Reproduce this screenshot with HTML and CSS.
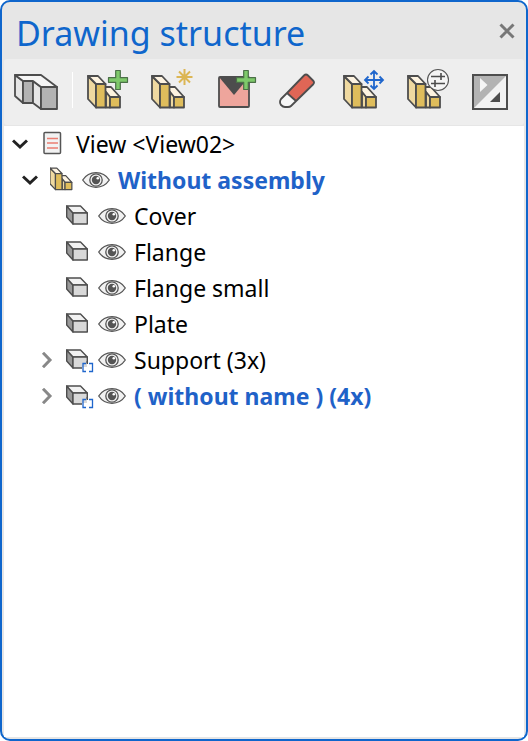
FILE: index.html
```
<!DOCTYPE html>
<html lang="en">
<head>
  <meta charset="UTF-8" />
  <title>Drawing structure</title>
  <meta name="viewport" content="width=device-width, initial-scale=1.0" />
  <link rel="stylesheet" href="styles.css">
</head>
<body>
  <!-- shared icons -->
  <svg class="sprite" aria-hidden="true">
    <symbol id="assembly" viewBox="0 0 44 44">
      <g stroke="#4d4d4d" stroke-width="1.8" stroke-linejoin="round">
        <path fill="#fdf3e0" d="M19 19h6l9 10H24l-5-6z"/>
        <path fill="#efd9a0" d="M20 24l4 5v10.500h-4z"/>
        <path fill="#dfbd5c" d="M24 29h10v10.500H24z"/>
        <path fill="#efd9a0" d="M2 8l8 8v23.500l-8-8.500z"/>
        <path fill="#fdf3e0" d="M2 8h10l7.500 8H10z"/>
        <path fill="#dfbd5c" d="M10 16h9.500v23.500H10z"/>
      </g>
    </symbol>
    <symbol id="plus" viewBox="0 0 44 44">
      <path fill="#7ec96a" stroke="#4b7047" stroke-width="1.200" stroke-linejoin="round" d="M29.700 2.500h4.600v7.200h7.200v4.600h-7.200v7.200h-4.600v-7.200h-7.200v-4.600h7.200z"/>
    </symbol>
    <symbol id="cube" viewBox="0 0 28 28">
      <g stroke="#4d4d4d" stroke-width="1.400" stroke-linejoin="round">
        <path fill="#999" d="M0.700 4l6.300 7v11l-6.300-7z"/>
        <path fill="#f2f2f2" d="M0.700 4h13.800l6.800 7H7z"/>
        <path fill="#d9d9d9" d="M7 11h14.300v11H7z"/>
      </g>
    </symbol>
    <symbol id="cubes" viewBox="0 0 28 28">
      <use href="#cube"/>
      <path fill="#fff" d="M16 17h12v10H16z"/>
      <path fill="#d9d9d9" d="M16 17h5v4h-5z"/>
      <path fill="none" stroke="#4d4d4d" stroke-width="1.400" d="M21.300 15v3"/>
      <path fill="none" stroke="#1f66cc" stroke-width="1.300" d="M20 17.500h-3v8h3M23 17.500h3.500v8H23"/>
    </symbol>
    <symbol id="eye" viewBox="0 0 28 20">
      <path fill="#f2f2f2" stroke="#555" stroke-width="1.300" d="M0.700 10C4 5 9 2.700 14 2.700S24 5 27.300 10C24 15 19 17.300 14 17.300S4 15 0.700 10z"/>
      <circle cx="14" cy="10" r="6.200" fill="#f2f2f2" stroke="#555" stroke-width="1.300"/>
      <circle cx="14" cy="10" r="4.200" fill="#555"/>
      <circle cx="15.800" cy="8.300" r="1.300" fill="#fff"/>
    </symbol>
    <symbol id="open" viewBox="0 0 16 16">
      <path fill="none" stroke="#222" stroke-width="3" d="M1 4.500l7 6.500 7-6.500"/>
    </symbol>
    <symbol id="closed" viewBox="0 0 16 16">
      <path fill="none" stroke="#888" stroke-width="3" d="M5 0.800L12 8l-7 7.200"/>
    </symbol>
  </svg>

  <div class="panel">
    <header class="title-bar">
      <h1>Drawing structure</h1>
      <button class="close" aria-label="Close">
        <svg viewBox="0 0 16 16"><path fill="none" stroke="#777" stroke-width="3" d="M1.500 1.500l13 13M14.500 1.500l-13 13"/></svg>
      </button>
    </header>

    <div class="toolbar">
      <button aria-label="Show part">
        <svg viewBox="0 0 44 44">
          <g stroke="#4d4d4d" stroke-width="1.800" stroke-linejoin="round">
            <path fill="#e6e6e6" d="M1 7l8 6v22l-8-7z"/>
            <path fill="#b3b3b3" d="M9 13h10v22H9z"/>
            <path fill="#e6e6e6" d="M19 13l8 6v22l-8-6z"/>
            <path fill="#f5f5f5" d="M1 7h26l16 12H27l-8-6H9z"/>
            <path fill="#b3b3b3" d="M27 19h16v22H27z"/>
          </g>
        </svg>
      </button>
      <span class="divider"></span>
      <button aria-label="Add assembly">
        <svg viewBox="0 0 44 44"><use href="#assembly"/><use href="#plus"/></svg>
      </button>
      <button aria-label="New assembly">
        <svg viewBox="0 0 44 44">
          <use href="#assembly"/>
          <path stroke="#dcb654" stroke-width="2" d="M34.500 1v16M26.500 9h16M29 3.500l11 11M40 3.500l-11 11"/>
        </svg>
      </button>
      <button aria-label="Add view">
        <svg viewBox="0 0 44 44">
          <rect x="5" y="9" width="30" height="30" rx="1" fill="#eea59c"/>
          <path fill="#4d4d4d" d="M5 9h30L20 27z"/>
          <rect x="5" y="9" width="30" height="30" rx="1" fill="none" stroke="#4d4d4d" stroke-width="1.800"/>
          <use href="#plus"/>
        </svg>
      </button>
      <button aria-label="Erase">
        <svg viewBox="0 0 44 44">
          <path fill="#f7f7f7" d="M9 25l-6 6q-2 3 0 6 2 2 4 2h3q2 0 3-1l5-5z"/>
          <path fill="#e06656" d="M9 25L26 7.500q2-2 4 0l5 5q2 2 0 4L18 33z"/>
          <path fill="none" stroke="#4d4d4d" stroke-width="1.800" stroke-linejoin="round" d="M9 25L26 7.500q2-2 4 0l5 5q2 2 0 4L13 38q-1 1-3 1H7q-2 0-4-2-2-3 0-6zM9 25l9 8"/>
        </svg>
      </button>
      <button aria-label="Move assembly">
        <svg viewBox="0 0 44 44">
          <use href="#assembly"/>
          <path fill="none" stroke="#1f66cc" stroke-width="1.800" d="M32 3.500v17M23.500 12h17M28.500 6.500L32 3l3.500 3.500M28.500 17.500L32 21l3.500-3.500M26.500 8.500L23 12l3.500 3.500M37.500 8.500L41 12l-3.500 3.500"/>
        </svg>
      </button>
      <button aria-label="Assembly settings">
        <svg viewBox="0 0 44 44">
          <use href="#assembly"/>
          <circle cx="32" cy="12" r="10.500" fill="#f5f5f5" stroke="#555" stroke-width="1.100"/>
          <path fill="none" stroke="#4d4d4d" stroke-width="1.600" d="M25 8.500h14M35 5v7M25 15.500h14M29 12v7"/>
        </svg>
      </button>
      <button aria-label="Invert">
        <svg viewBox="0 0 44 44">
          <path fill="#f2f2f2" d="M3 7h34v34H3z"/>
          <path fill="#b3b3b3" d="M3 7h34L3 41z"/>
          <path fill="#f5f5f5" d="M10 10l7.500 7-7.500 7z"/>
          <path fill="#4d4d4d" d="M30 24v10H20z"/>
          <rect x="3" y="7" width="34" height="34" fill="none" stroke="#4d4d4d" stroke-width="2"/>
        </svg>
      </button>
    </div>

    <ul class="tree">
      <li>
        <div class="row">
          <button class="toggle" aria-label="Collapse"><svg><use href="#open"/></svg></button>
          <svg class="icon" viewBox="0 0 28 28">
            <rect x="4" y="2.500" width="16.500" height="21" rx="1" fill="#f2f2f2" stroke="#555" stroke-width="1.500"/>
            <path stroke="#ea7d72" stroke-width="1.600" d="M7 8.500h11M7 13h11M7 18h11"/>
          </svg>
          <span class="label">View &lt;View02&gt;</span>
        </div>
        <ul>
          <li>
            <div class="row active">
              <button class="toggle" aria-label="Collapse"><svg><use href="#open"/></svg></button>
              <svg class="icon" viewBox="2 5 41 41"><use href="#assembly" width="44" height="44"/></svg>
              <button class="eye" aria-label="Visibility"><svg><use href="#eye"/></svg></button>
              <span class="label">Without assembly</span>
            </div>
            <ul class="parts">
              <li class="row">
                <span class="toggle"></span>
                <svg class="icon"><use href="#cube"/></svg>
                <button class="eye" aria-label="Visibility"><svg><use href="#eye"/></svg></button>
                <span class="label">Cover</span>
              </li>
              <li class="row">
                <span class="toggle"></span>
                <svg class="icon"><use href="#cube"/></svg>
                <button class="eye" aria-label="Visibility"><svg><use href="#eye"/></svg></button>
                <span class="label">Flange</span>
              </li>
              <li class="row">
                <span class="toggle"></span>
                <svg class="icon"><use href="#cube"/></svg>
                <button class="eye" aria-label="Visibility"><svg><use href="#eye"/></svg></button>
                <span class="label">Flange small</span>
              </li>
              <li class="row">
                <span class="toggle"></span>
                <svg class="icon"><use href="#cube"/></svg>
                <button class="eye" aria-label="Visibility"><svg><use href="#eye"/></svg></button>
                <span class="label">Plate</span>
              </li>
              <li class="row">
                <button class="toggle" aria-label="Expand"><svg><use href="#closed"/></svg></button>
                <svg class="icon"><use href="#cubes"/></svg>
                <button class="eye" aria-label="Visibility"><svg><use href="#eye"/></svg></button>
                <span class="label">Support (3x)</span>
              </li>
              <li class="row active">
                <button class="toggle" aria-label="Expand"><svg><use href="#closed"/></svg></button>
                <svg class="icon"><use href="#cubes"/></svg>
                <button class="eye" aria-label="Visibility"><svg><use href="#eye"/></svg></button>
                <span class="label">( without name ) (4x)</span>
              </li>
            </ul>
          </li>
        </ul>
      </li>
    </ul>
  </div>
</body>
</html>
```
FILE: styles.css
```
* {
  box-sizing: border-box;
}

body {
  margin: 0;
  background: #fff;
  font-family: 'Segoe UI', 'Noto Sans', sans-serif;
}

button {
  padding: 0;
  border: 0;
  background: none;
  cursor: pointer;
}

svg {
  display: block;
  width: 100%;
  height: 100%;
}

.sprite {
  position: absolute;
  width: 0;
  height: 0;
}

.panel {
  display: flex;
  flex-direction: column;
  min-height: 100vh;
  padding: 0 2px 2px;
  border: 2px solid #0f66cc;
  border-radius: 10px;
  background: #e6e6e6;
}

.title-bar {
  display: flex;
  align-items: center;
  justify-content: space-between;
  height: 57px;
  padding: 0 9px 0 12px;
}

.title-bar h1 {
  margin: 0;
  padding-top: 4px;
  font-size: 34px;
  font-weight: 400;
  line-height: 52px;
  color: #0f66cc;
}

.close {
  width: 16px;
  height: 16px;
}

.toolbar {
  display: flex;
  align-items: center;
  gap: 20px;
  height: 66px;
  padding: 0 10px 4px;
  border-radius: 3px;
  background: #eee;
}

.toolbar button {
  flex: none;
  width: 44px;
  height: 44px;
}

.divider {
  width: 1px;
  height: 36px;
  margin: 0 -7px 0 -6px;
  background: #fff;
}

.tree {
  flex: 1;
  margin-top: 1px;
  padding: 0 0 0 8px;
  background: #fff;
}

ul {
  margin: 0;
  padding: 0 0 0 10px;
  list-style: none;
}

.parts {
  padding-left: 16px;
}

.row {
  display: flex;
  align-items: center;
  height: 36px;
}

.toggle {
  flex: none;
  width: 16px;
  height: 16px;
  margin-right: 12px;
}

.icon {
  flex: none;
  width: 28px;
  height: 28px;
}

.eye {
  flex: none;
  width: 28px;
  height: 20px;
  margin-left: 4px;
}

.label {
  margin-left: 8px;
  font-size: 23px;
  line-height: 36px;
  white-space: nowrap;
  color: #000;
}

.active .label {
  font-weight: 700;
  color: #1f62c8;
}
```
